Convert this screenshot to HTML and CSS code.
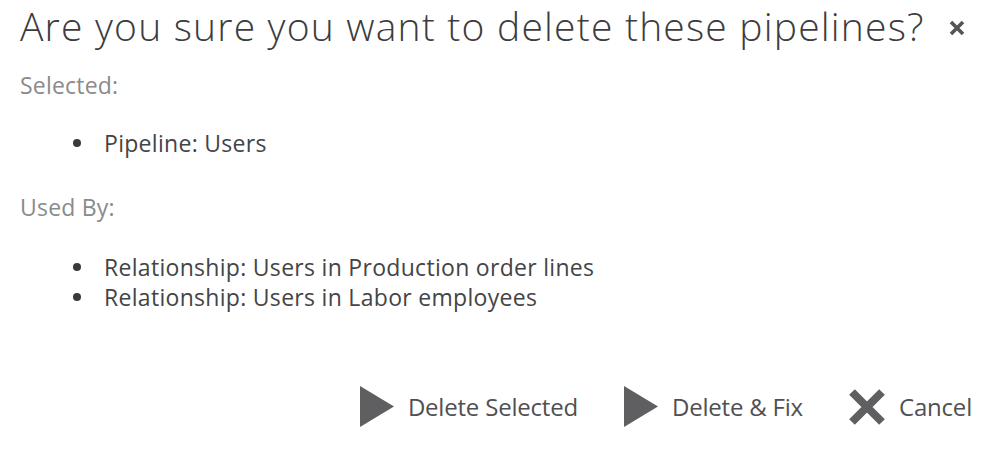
FILE: index.html
```html
<!DOCTYPE html>
<html>
<head>
<meta charset="utf-8">
<link rel="stylesheet" href="styles.css">
</head>
<body>
<div class="dialog">
  <div class="header">
    <h1 class="title">Are you sure you want to delete these pipelines?</h1>
    <span class="close" aria-label="Close">
      <svg width="16" height="16" viewBox="0 0 16 16"><path d="M2 2 L14 14 M14 2 L2 14" stroke="#555" stroke-width="3.6" stroke-linecap="butt"/></svg>
    </span>
  </div>
  <div class="label">Selected:</div>
  <ul class="items items-selected">
    <li>Pipeline: Users</li>
  </ul>
  <div class="label">Used By:</div>
  <ul class="items items-used">
    <li>Relationship: Users in Production order lines</li>
    <li>Relationship: Users in Labor employees</li>
  </ul>
  <div class="actions">
    <button class="action">
      <svg width="34" height="41" viewBox="0 0 34 41"><polygon points="0,0 34,20.5 0,41" fill="#5f5e60"/></svg>
      <span>Delete Selected</span>
    </button>
    <button class="action">
      <svg width="34" height="41" viewBox="0 0 34 41"><polygon points="0,0 34,20.5 0,41" fill="#5f5e60"/></svg>
      <span>Delete &amp; Fix</span>
    </button>
    <button class="action">
      <svg width="36" height="36" viewBox="0 0 36 36"><path d="M3 3 L33 33 M33 3 L3 33" stroke="#5f5e60" stroke-width="8"/></svg>
      <span>Cancel</span>
    </button>
  </div>
</div>
</body>
</html>
```
FILE: styles.css
```css
html, body {
  margin: 0;
  padding: 0;
  background: #ffffff;
}
body {
  font-family: "Open Sans", "DejaVu Sans", sans-serif;
  color: #444;
}
.dialog {
  padding: 0 28px 0 20px;
}
.header {
  display: flex;
  align-items: flex-start;
  justify-content: space-between;
  height: 60px;
}
.title {
  margin: 0;
  font-weight: 300;
  font-size: 39px;
  line-height: 52px;
  color: #3c3c3f;
  letter-spacing: 1.2px;
  white-space: nowrap;
}
.close {
  display: flex;
  width: 16px;
  height: 16px;
  margin-right: 7px;
  margin-top: 20px;
}
.label {
  font-size: 23px;
  line-height: 30px;
  color: #8a8a8c;
  letter-spacing: 0.2px;
  margin-top: 10px;
}
.items {
  list-style: none;
  margin: 0;
  padding-left: 53px;
  font-size: 23px;
  line-height: 30px;
  letter-spacing: 0.3px;
  color: #444447;
}
.items li {
  display: flex;
  align-items: center;
}
.items li::before {
  content: "";
  width: 8px;
  height: 8px;
  border-radius: 50%;
  background: #3a3a3c;
  margin-right: 23px;
  flex: none;
}
.items-selected {
  margin-top: 28px;
  margin-bottom: 34px;
}
.items-used {
  margin-top: 30px;
}
.actions {
  display: flex;
  justify-content: flex-end;
  align-items: center;
  gap: 46px;
  margin-top: 74px;
}
.action {
  display: flex;
  align-items: center;
  gap: 14px;
  border: 0;
  background: none;
  padding: 0;
  font-family: "Open Sans", "DejaVu Sans", sans-serif;
  font-size: 24px;
  letter-spacing: -0.2px;
  color: #505052;
  cursor: pointer;
}
```
